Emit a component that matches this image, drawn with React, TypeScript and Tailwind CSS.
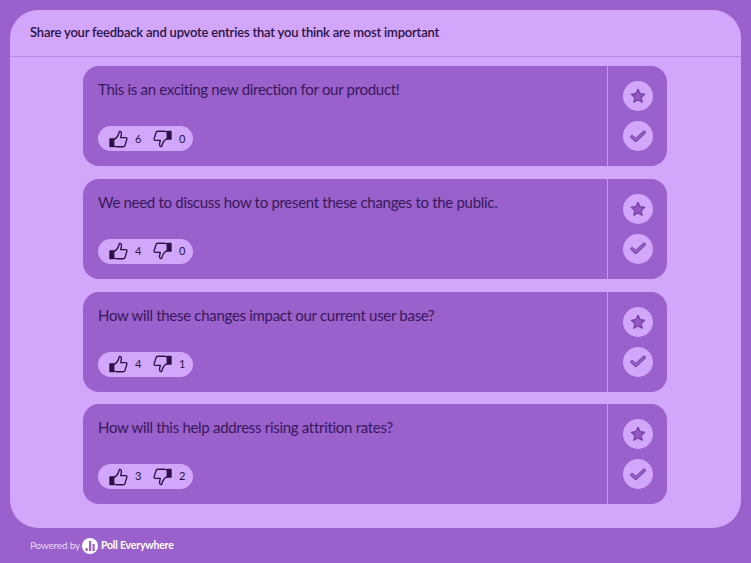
const entries = [
  { text: 'This is an exciting new direction for our product!', up: 6, down: 0 },
  { text: 'We need to discuss how to present these changes to the public.', up: 4, down: 0 },
  { text: 'How will these changes impact our current user base?', up: 4, down: 1 },
  { text: 'How will this help address rising attrition rates?', up: 3, down: 2 },
];

const ThumbUp = () => (
  <svg width="19" height="18" viewBox="0 0 20 19" fill="none" stroke="#2a1245" strokeWidth="1.4" strokeLinejoin="round">
    <path d="M1 9.500h4v8H1z" fill="#2a1245" />
    <path d="M5 10c2.500-1 4.300-3.500 5-5.500.4-1.200.4-2.500 1.200-3 1.500-.5 2.200 1.700 1.800 3.500L12.300 8h5.200c1.300 0 1.800 1.300 1.200 2.300l-1.900 6c-.3 1-.9 1.400-1.900 1.400H8c-1.200 0-2-.6-3-.9" />
  </svg>
);

const ThumbDown = () => (
  <svg width="19" height="18" viewBox="0 0 20 19" fill="none" stroke="#2a1245" strokeWidth="1.4" strokeLinejoin="round">
    <path d="M15 1.500h4v8h-4z" fill="#2a1245" />
    <path d="M15 9c-2.500 1-4.300 3.500-5 5.500-.4 1.200-.4 2.500-1.200 3-1.500.5-2.200-1.700-1.800-3.500l.7-3H2.500C1.200 11 .7 9.700 1.300 8.700l1.900-6c.3-1 .9-1.400 1.900-1.400H12c1.200 0 2 .6 3 .9" />
  </svg>
);

const Star = () => (
  <svg width="16" height="16" viewBox="0 0 16 16" fill="#9458c6" stroke="#6f3ca0" strokeWidth="1.100" strokeLinejoin="round">
    <path d="M8 1.200l2.100 4.400 4.700.6-3.500 3.300.9 4.800L8 12l-4.200 2.300.9-4.800L1.200 6.200l4.700-.6z" />
  </svg>
);

const Check = () => (
  <svg width="16" height="13" viewBox="0 0 16 13" fill="none" strokeLinecap="round" strokeLinejoin="round">
    <path d="M2 6.800l3.700 3.400L14 2.400" stroke="#6f3ca0" strokeWidth="3.400" />
    <path d="M2 6.800l3.700 3.400L14 2.400" stroke="#9a60cb" strokeWidth="1.800" />
  </svg>
);

const PollLogo = () => (
  <svg width="16" height="16" viewBox="0 0 16 16">
    <circle cx="8" cy="8" r="8" fill="#ffffff" />
    <rect x="3.500" y="10" width="2.200" height="3" fill="#9a60cb" />
    <rect x="7" y="3" width="2.200" height="10" fill="#9a60cb" />
    <rect x="10.500" y="6" width="2.200" height="7" fill="#9a60cb" />
  </svg>
);

function EntryCard({ text, up, down }: { text: string; up: number; down: number }) {
  return (
    <div className="ml-[73px] flex h-[100px] w-[584px] overflow-hidden rounded-[16px] bg-[#9a60cb]">
      <div className="flex flex-1 flex-col justify-between pt-[13px] pb-[15px] pl-[15px]">
        <p className="text-[15px] leading-[20px] tracking-[-0.3px] text-[#38195c]">{text}</p>
        <div className="flex h-[25px] w-[95px] items-center rounded-full bg-[#d2a6fa] pl-[11px] text-[11px] text-[#2a1245]">
          <ThumbUp />
          <span className="ml-[7px] w-[18px]">{up}</span>
          <ThumbDown />
          <span className="ml-[7px]">{down}</span>
        </div>
      </div>
      <div className="flex w-[60px] flex-col items-center justify-center gap-[10px] border-l border-[#c795f3]">
        <button className="flex h-[30px] w-[30px] items-center justify-center rounded-full bg-[#d2a6fa]">
          <Star />
        </button>
        <button className="flex h-[30px] w-[30px] items-center justify-center rounded-full bg-[#d2a6fa]">
          <Check />
        </button>
      </div>
    </div>
  );
}

export default function App() {
  return (
    <div className="flex h-[563px] w-[751px] flex-col bg-[#9a60cb] px-[10px] pt-[10px] font-['Lato',sans-serif]">
      <div className="h-[518px] rounded-[28px] bg-[#d2a6fa]">
        <div className="flex h-[47px] items-center border-b border-[#b98ae6] pl-[20px] text-[13px] font-semibold tracking-[-0.2px] text-[#2a1245]">
          Share your feedback and upvote entries that you think are most important
        </div>
        <div className="flex flex-col gap-[12.6px] pt-[9.4px]">
          {entries.map((entry) => (
            <EntryCard key={entry.text} {...entry} />
          ))}
        </div>
      </div>
      <div className="flex flex-1 items-center pl-[20px] text-[10px] tracking-[-0.2px] text-[#ecd9fd]">
        <span>Powered by</span>
        <span className="ml-[2px]"><PollLogo /></span>
        <span className="ml-[3px] text-[10.5px] font-bold text-white">Poll Everywhere</span>
      </div>
    </div>
  );
}
